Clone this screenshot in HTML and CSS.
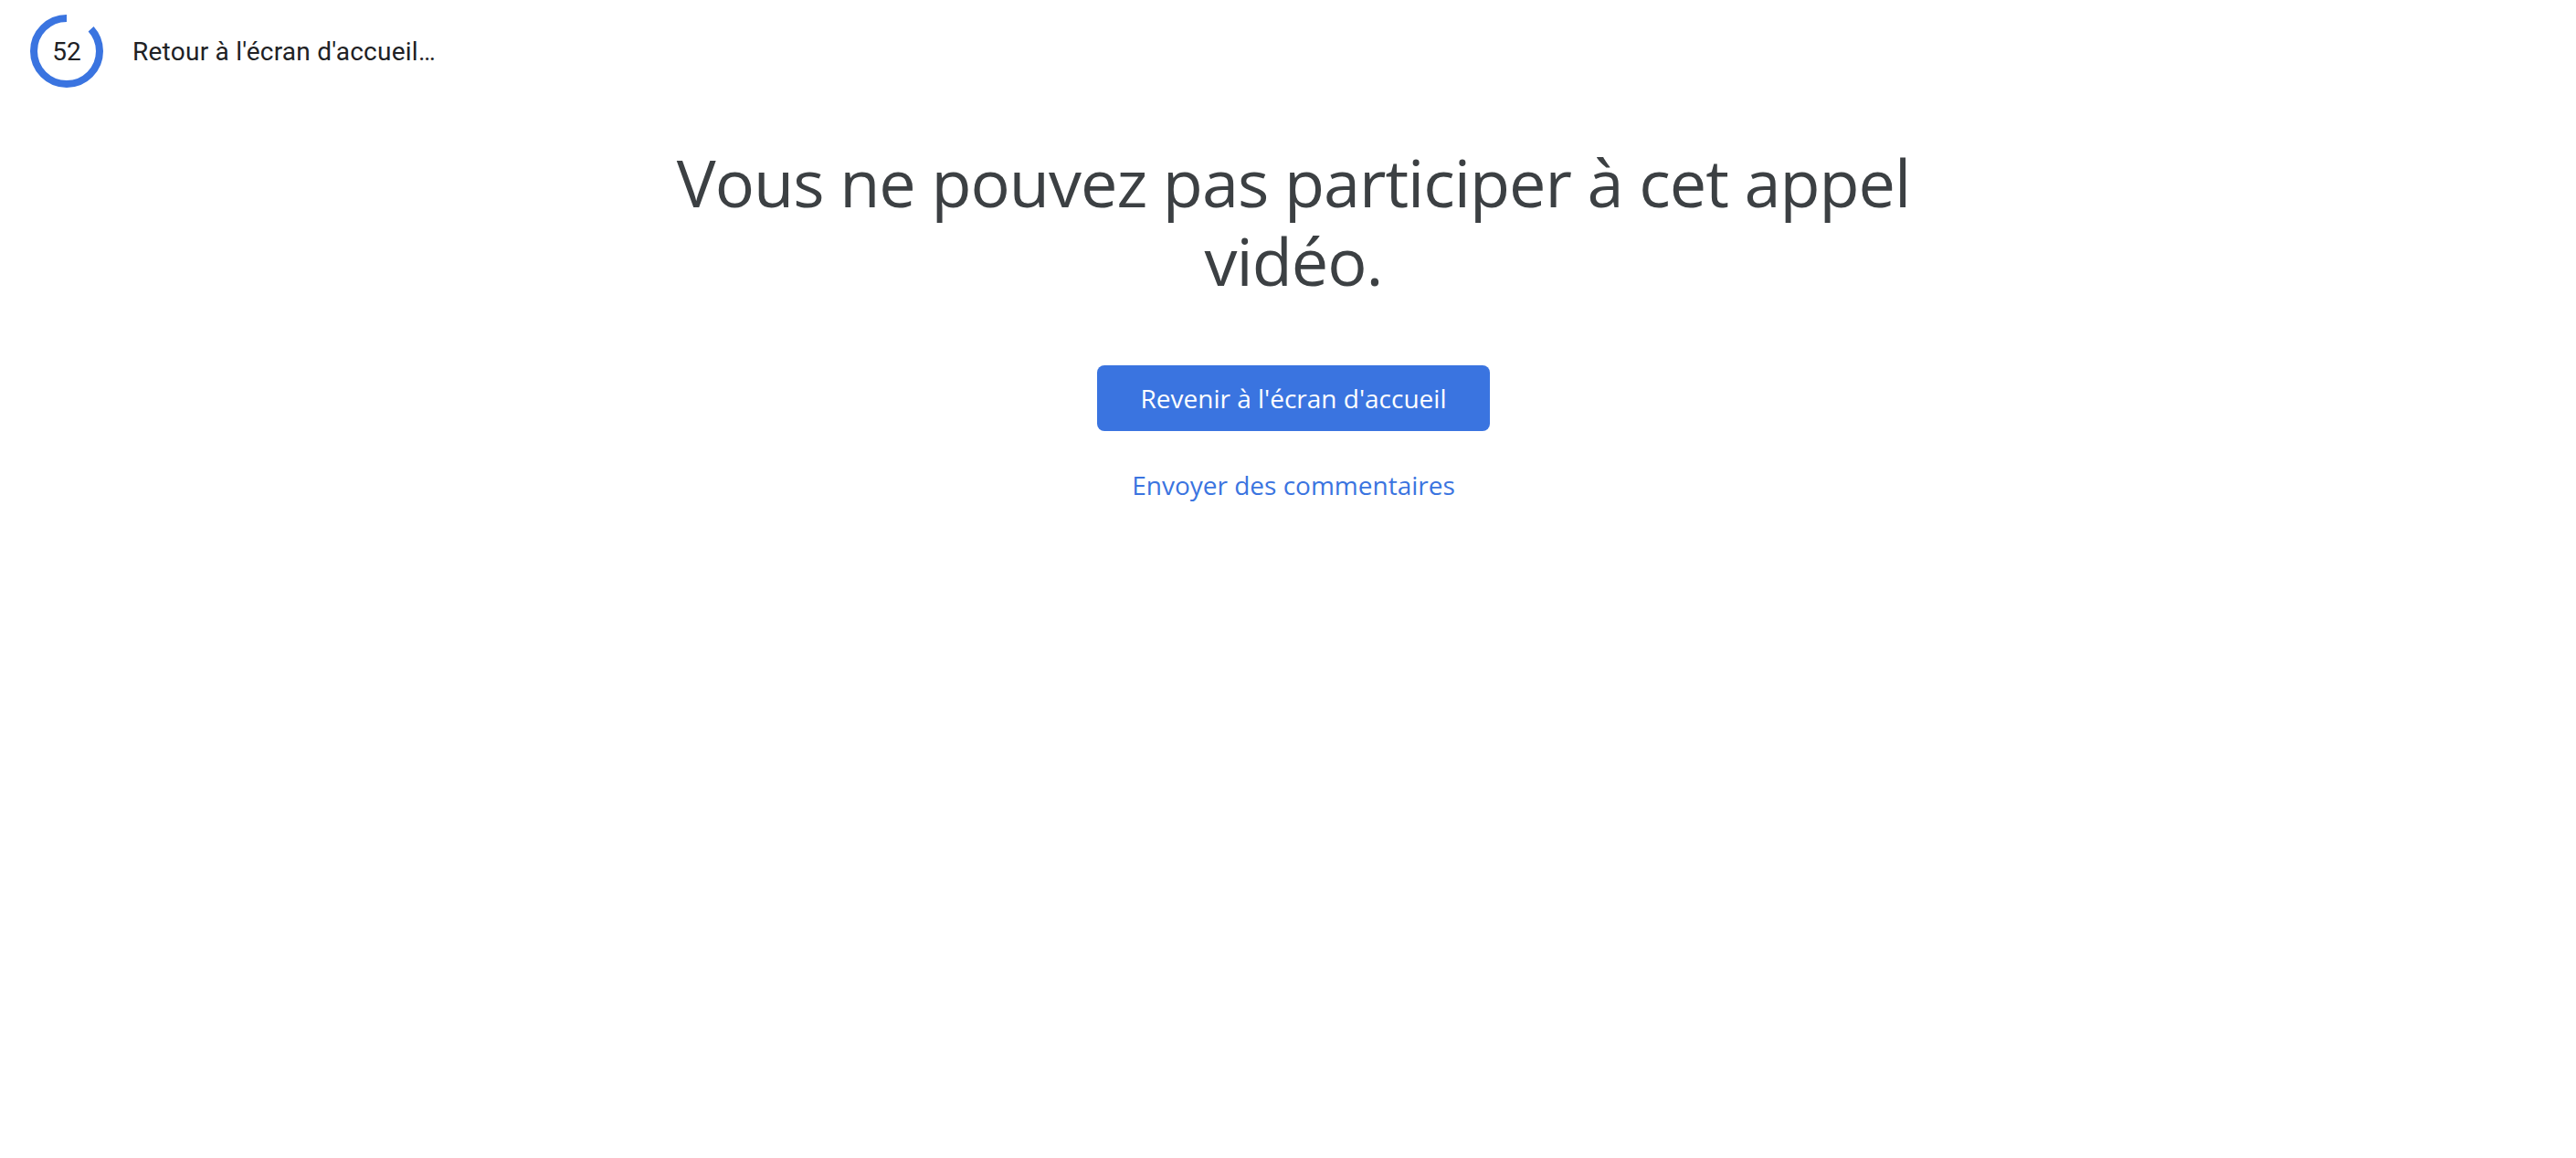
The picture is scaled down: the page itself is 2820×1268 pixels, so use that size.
FILE: index.html
```html
<!DOCTYPE html>
<html lang="fr">
<head>
<meta charset="utf-8">
<title>Meet</title>
<link rel="stylesheet" href="styles.css">
</head>
<body>
<header class="countdown">
  <div class="timer">
    <svg class="ring" width="80" height="80" viewBox="0 0 80 80">
      <circle cx="40" cy="40" r="36" fill="none" stroke="#3a74e0" stroke-width="8"
        stroke-dasharray="195.98 226.19" transform="rotate(-90 40 40) scale(1 -1) translate(0 -80)"></circle>
    </svg>
    <span class="timer-num">52</span>
  </div>
  <span class="timer-label">Retour à l'écran d'accueil…</span>
</header>
<main class="content">
  <h1 class="title"><span class="title-line">Vous ne pouvez pas participer à cet appel</span><span class="title-line">vidéo.</span></h1>
  <button class="primary">Revenir à l'écran d'accueil</button>
  <a class="feedback" href="#">Envoyer des commentaires</a>
</main>
</body>
</html>
```

FILE: styles.css
```css
html, body {
  margin: 0;
  padding: 0;
  background: #ffffff;
}
body {
  font-family: Roboto, "Liberation Sans", sans-serif;
  color: #202124;
}
.countdown {
  display: flex;
  align-items: center;
  gap: 32px;
  padding: 16px 0 0 33px;
}
.timer {
  position: relative;
  width: 80px;
  height: 80px;
}
.ring {
  display: block;
}
.timer-num {
  position: absolute;
  inset: 0;
  display: flex;
  align-items: center;
  justify-content: center;
  font-size: 28px;
  color: #202124;
}
.timer-label {
  font-size: 28px;
  letter-spacing: 0.25px;
  color: #202124;
}
.content {
  display: flex;
  flex-direction: column;
  align-items: center;
  padding-left: 12px;
}
.title {
  margin: 60px 0 0;
  display: flex;
  flex-direction: column;
  align-items: center;
  font-family: "Open Sans", sans-serif;
  font-weight: 400;
  font-size: 72px;
  letter-spacing: -1px;
  color: #3c4043;
  text-align: center;
}
.title-line {
  display: block;
  height: 86px;
  line-height: 86px;
}
.primary {
  margin-top: 72px;
  height: 72px;
  padding: 0 48px;
  border: none;
  border-radius: 8px;
  background: #3a74e0;
  color: #ffffff;
  font-family: "Open Sans", sans-serif;
  font-weight: 500;
  font-size: 28px;
  cursor: pointer;
}
.feedback {
  margin-top: 39px;
  font-family: "Open Sans", sans-serif;
  font-weight: 500;
  font-size: 28px;
  line-height: 40px;
  color: #3a74e0;
  text-decoration: none;
}
```
